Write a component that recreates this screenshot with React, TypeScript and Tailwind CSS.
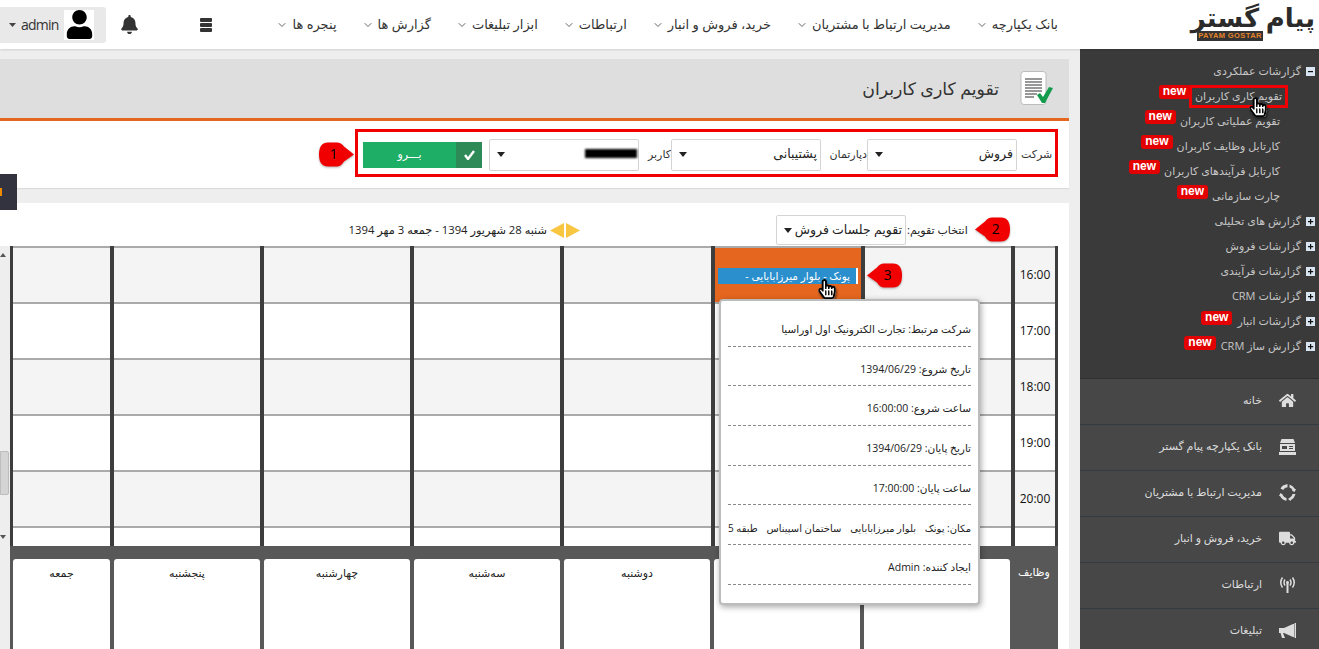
import { ChevronDown } from 'lucide-react';
import { FaBell, FaHandPointer, FaHome, FaRegHandPointer, FaTruck, FaUser } from 'react-icons/fa';

const NAV = ['بانک یکپارچه', 'مدیریت ارتباط با مشتریان', 'خرید، فروش و انبار', 'ارتباطات', 'ابزار تبلیغات', 'گزارش ها', 'پنجره ها'];

const TREE_TOP = ['گزارش های تحلیلی', 'گزارشات فروش', 'گزارشات فرآیندی', 'گزارشات CRM'];

const SUB_ITEMS = ['تقویم عملیاتی کاربران', 'کارتابل وظایف کاربران', 'کارتابل فرآیندهای کاربران', 'چارت سازمانی'];

const COLUMNS = [
  { width: 'w-[100px]', border: 'border-l-[3px]' },
  { width: 'w-[150px]', border: 'border-l-4' },
  { width: 'w-[150px]', border: 'border-l-4' },
  { width: 'w-[150px]', border: 'border-l-4' },
  { width: 'w-[151px]', border: 'border-l-4' },
  { width: 'w-[150px]', border: 'border-l-4' },
  { width: 'w-[150px]', border: 'border-l-4' },
];

const ROWS = [
  { h: 'h-[56px]', bg: 'bg-[#f4f4f4]', time: '16:00' },
  { h: 'h-[56px]', bg: 'bg-white', time: '17:00' },
  { h: 'h-[56px]', bg: 'bg-[#f4f4f4]', time: '18:00' },
  { h: 'h-[56px]', bg: 'bg-white', time: '19:00' },
  { h: 'h-[56px]', bg: 'bg-[#f4f4f4]', time: '20:00' },
  { h: 'h-[20px]', bg: 'bg-white', time: '' },
];

const TASKS = [
  { width: 'w-[97px]', label: 'جمعه' },
  { width: 'w-[146px]', label: 'پنجشنبه' },
  { width: 'w-[146px]', label: 'چهارشنبه' },
  { width: 'w-[146px]', label: 'سه‌شنبه' },
  { width: 'w-[146px]', label: 'دوشنبه' },
  { width: 'w-[146px]', label: '' },
  { width: 'w-[146px]', label: '' },
];

const POPUP_ROWS = [
  { text: 'شرکت مرتبط: تجارت الکترونیک اول اوراسیا', cls: 'tracking-[-0.4px]' },
  { text: 'تاریخ شروع: 1394/06/29', cls: '' },
  { text: 'ساعت شروع: 16:00:00', cls: '' },
  { text: 'تاریخ پایان: 1394/06/29', cls: '' },
  { text: 'ساعت پایان: 17:00:00', cls: '' },
];

const PLACE_PARTS = ['مکان: پونک', 'بلوار میرزابابایی', 'ساختمان اسپیناس', 'طبقه 5'];

function Caret() {
  return (
    <svg width="8" height="5" viewBox="0 0 8 5" className="shrink-0">
      <path d="M0 0h8L4 5z" fill="#222" />
    </svg>
  );
}

function Select({ width, height, label }: { width: string; height: string; label?: string }) {
  return (
    <div className={`${width} ${height} relative flex items-center justify-between pl-[7px] pr-[3px] bg-white border border-[#d4d4d4] rounded-[2px]`}>
      <Caret />
      {label && <span dir="rtl" className="text-[12.500px] text-[#222]">{label}</span>}
    </div>
  );
}

function Callout({ n, side, className }: { n: number; side: 'left' | 'right'; className: string }) {
  return (
    <div className={`absolute w-[37px] h-[25px] drop-shadow-[0_1px_1px_rgba(0,0,0,0.3)] ${className}`}>
      <svg width="37" height="25" viewBox="0 0 37 25" className="absolute inset-0">
        {side === 'right' ? (
          <path d="M10 0.500h9q4 0 7 4l10 8-10 7q-3 5-7 5h-9Q1 24.500 1 12.500T10 .500z" fill="#f00000" />
        ) : (
          <path d="M27 0.500h-9q-4 0-7 4l-10 8 10 7q3 5 7 5h9q9 0 9-12T27 .500z" fill="#f00000" />
        )}
      </svg>
      <span className={`absolute top-[3px] text-[14px] leading-[18px] text-black ${side === 'right' ? 'left-[12px]' : 'left-[18px]'}`}>{n}</span>
    </div>
  );
}

function Hand({ className }: { className: string }) {
  return (
    <div className={`absolute w-[16px] h-[21px] drop-shadow-[1px_2px_1px_rgba(0,0,0,0.5)] ${className}`}>
      <FaHandPointer className="absolute inset-0 text-white" size={20} />
      <FaRegHandPointer className="absolute inset-0 text-black" size={20} />
    </div>
  );
}

function TreeBox({ open }: { open?: boolean }) {
  return (
    <svg width="9" height="9" viewBox="0 0 9 9" className="shrink-0">
      <rect width="9" height="9" fill="#d8e4f0" />
      <path d={open ? 'M2 4h5v1.200H2z' : 'M2 4h2V2h1.200v2h2v1.200h-2v2H4v-2H2z'} fill="#111" />
    </svg>
  );
}

function NewBadge({ className = '' }: { className?: string }) {
  return (
    <span className={`inline-block h-[14px] px-[4px] rounded-[3px] bg-[#e30000] text-white text-[12px] leading-[12px] font-bold font-['Liberation_Sans',sans-serif] ${className}`}>
      new
    </span>
  );
}

function BankIcon() {
  return (
    <svg width="17" height="16" viewBox="0 0 17 16" fill="#ddd">
      <path d="M2.500 0h12l1.500 4H1z" />
      <path d="M1 5h15v7H1zM3 7v3h5V7zm7 0v1h4V7zm0 2v1h4V9z" fillRule="evenodd" />
      <path d="M0 13h17v3H0z" />
    </svg>
  );
}

function RingIcon() {
  return (
    <svg width="17" height="17" viewBox="0 0 17 17" fill="#ddd">
      <path d="M4 1.500 8.500 0v3.200Q5.500 3.500 4.200 6L1.500 4.500Q2.500 2.500 4 1.500z" />
      <path d="M10.500.500q3.500 1 5.500 4.500l1 0-1.500 3-3-1.500h1.200Q12.700 4 10.500 3.400z" />
      <path d="M16.500 10q-1 4-4.500 6l-.5 1-2.500-2 2-1.500q2-1.200 2.500-3.500z" />
      <path d="M7.500 16.800Q3 16 1 12L0 12l1.500-3 2.800 2H3.600Q5 13.500 7.500 14z" />
    </svg>
  );
}

function AntennaIcon() {
  return (
    <svg width="17" height="17" viewBox="0 0 17 17" fill="none" stroke="#ddd" strokeWidth="1.500">
      <path d="M3.500 1.500q-3.500 5 0 10M13.500 1.500q3.500 5 0 10M6 3.500q-2 3 0 6M11 3.500q2 3 0 6" />
      <circle cx="8.500" cy="6.500" r="1.400" fill="#ddd" stroke="none" />
      <path d="M8.500 7v10" strokeWidth="2" />
    </svg>
  );
}

function HornIcon() {
  return (
    <svg width="17" height="16" viewBox="0 0 17 16" fill="#ddd">
      <path d="M0 5h5L14 1h1v13h-1L5 10H4l2 5H3L1.500 10H0z" />
      <path d="M15.500 0H17v15h-1.500z" />
    </svg>
  );
}

function DocIcon() {
  return (
    <svg width="34" height="36" viewBox="0 0 34 36">
      <rect x="1" y="0.500" width="25" height="33" rx="3" fill="#fff" stroke="#bdbdbd" />
      <path d="M5 8h17M5 11h17M5 14h17M5 17h17M5 20h17M5 23h12M5 26h9" stroke="#777" strokeWidth="1.500" />
      <path d="M17 24l3-2 3 4 6-10 4 1-8 15h-3z" fill="#149a4c" />
    </svg>
  );
}

function Logo() {
  return (
    <div className="relative w-[124px] h-[30px]">
      <span dir="rtl" className="absolute right-[4px] top-[-11px] whitespace-nowrap text-[26px] leading-[36px] font-bold text-[#2b2b2b] tracking-[-1px]">
        پیام گستر
      </span>
      <span className="absolute left-[2px] bottom-[-1px] w-[66px] h-[10px] bg-[#333] text-[#e5832a] text-[7.500px] leading-[10px] tracking-[0.4px] text-center font-['Liberation_Sans',sans-serif] font-bold">
        PAYAM GOSTAR
      </span>
    </div>
  );
}

function Header() {
  return (
    <header className="h-[49px] bg-white flex items-center shrink-0 relative z-10 shadow-[0_1px_2px_rgba(0,0,0,0.12)]">
      <div className="w-[106px] h-[36px] bg-[#e9e9e9] rounded-r-[3px] flex items-center pl-[9px] shrink-0">
        <svg width="7" height="4" viewBox="0 0 7 4" className="mr-[5px]"><path d="M0 0h7L3.500 4z" fill="#444" /></svg>
        <span className="text-[14px] text-[#333] font-['Open_Sans',sans-serif] tracking-[-0.8px] leading-none">admin</span>
        <div className="ml-[6px] w-[30px] h-[30px] bg-white flex items-center justify-center overflow-hidden">
          <FaUser size={29} className="text-black" />
        </div>
      </div>
      <FaBell size={19} className="ml-[14px] text-[#333] shrink-0" />
      <div className="ml-[61px] flex flex-col gap-[1px] shrink-0">
        <div className="w-[12px] h-[4px] rounded-[1px] bg-[#333]" />
        <div className="w-[12px] h-[4px] rounded-[1px] bg-[#333]" />
        <div className="w-[12px] h-[4px] rounded-[1px] bg-[#333]" />
      </div>
      <nav className="ml-auto flex flex-row-reverse items-center gap-[25px] text-[13px] text-[#333]">
        {NAV.map((item) => (
          <div key={item} className="flex flex-row-reverse items-center gap-[4px]">
            <span dir="rtl" className="whitespace-nowrap">{item}</span>
            <ChevronDown size={12} strokeWidth={1.500} className="text-[#333]" />
          </div>
        ))}
      </nav>
      <div className="ml-[137px] shrink-0">
        <Logo />
      </div>
    </header>
  );
}

function Calendar() {
  return (
    <div className="relative h-[403px]">
      <div className="flex h-[300px] overflow-hidden">
        <div className="w-[10px] bg-[#eeeeee] relative shrink-0">
          <svg width="6" height="4" viewBox="0 0 6 4" className="absolute left-[0px] top-[7px]"><path d="M0 4h6L3 0z" fill="#555" /></svg>
          <div className="absolute left-[0px] top-[205px] w-[9px] h-[44px] bg-[#d4d4d4] border border-[#bdbdbd] rounded-r-[2px]" />
          <svg width="6" height="4" viewBox="0 0 6 4" className="absolute left-[0px] top-[289px]"><path d="M0 0h6L3 4z" fill="#555" /></svg>
        </div>
        {COLUMNS.map((col, c) => (
          <div key={c} className={`${col.width} ${col.border} border-[#3d3d3d] shrink-0 flex flex-col`}>
            {ROWS.map((row, r) =>
              c === 5 && r === 0 ? (
                <div key={r} className="h-[56px] bg-[#e5671f] border-t-2 border-[#aaaaaa] flex items-center justify-center pt-[2px]">
                  <div className="w-[140px] h-[16px] bg-[#2b8fcd] border-r-2 border-white overflow-hidden pr-[6px] flex items-center">
                    <span dir="rtl" className="block w-full text-[10.500px] leading-[16px] text-white whitespace-nowrap">پونک - بلوار میرزابابایی -</span>
                  </div>
                </div>
              ) : (
                <div key={r} className={`${row.h} ${row.bg} border-t-2 border-[#aaaaaa] shrink-0`} />
              ),
            )}
          </div>
        ))}
        <div className="w-[47px] border-x-[3px] border-l-4 border-[#3d3d3d] shrink-0 flex flex-col">
          {ROWS.map((row, r) => (
            <div key={r} className={`${row.h} ${row.bg} border-t-2 border-[#aaaaaa] shrink-0 flex items-center justify-center text-[12px] text-[#111] font-['Open_Sans',sans-serif]`}>
              {row.time}
            </div>
          ))}
        </div>
      </div>

      <div className="flex">
        <div className="w-[10px] bg-[#eeeeee] shrink-0" />
        <div className="w-[1048px] bg-[#585858] pt-[13px] pl-[3px] flex h-[103px]">
          {TASKS.map((t, i) => (
            <div key={i} className={`${t.width} mr-[4px] bg-white rounded-t-[3px] shrink-0 pt-[5px] text-center leading-[14px]`}>
              <span dir="rtl" className="text-[11px] text-[#222]">{t.label}</span>
            </div>
          ))}
          <div dir="rtl" className="flex-1 text-center text-[11px] leading-[14px] text-white pt-[6px] -ml-[4px]">وظایف</div>
        </div>
      </div>

      <Callout n={3} side="left" className="left-[866px] top-[17px]" />
      <Hand className="left-[817px] top-[33px]" />

      <div className="absolute left-[719px] top-[53px] w-[261px] h-[306px] bg-white rounded-[4px] border-2 border-[#bcbcbc] shadow-[1px_2px_6px_rgba(0,0,0,0.35)] px-[7px] pt-[6px]">
        {POPUP_ROWS.map((row) => (
          <div key={row.text} dir="rtl" className={`h-[39.700px] flex items-end pb-[8px] border-b border-dashed border-[#888888] text-[10.500px] text-[#222] whitespace-pre ${row.cls}`}>
            {row.text}
          </div>
        ))}
        <div dir="rtl" className="h-[39.700px] flex items-end justify-between pb-[8px] border-b border-dashed border-[#888888] text-[10px] tracking-[-0.3px] text-[#222] whitespace-nowrap">
          {PLACE_PARTS.map((part) => (
            <span key={part}>{part}</span>
          ))}
        </div>
        <div dir="rtl" className="h-[39.700px] flex items-end pb-[8px] border-b border-dashed border-[#888888] text-[10.500px] text-[#222]">
          ایجاد کننده: Admin
        </div>
      </div>
    </div>
  );
}

function Main() {
  return (
    <main className="w-[1080px] shrink-0 bg-[#eeeeee] pt-[10px] relative">
      <div className="w-[1069px]">
        <div className="h-[59px] bg-[#dedede] flex items-center justify-end">
          <h1 dir="rtl" className="text-[17.300px] text-[#333] font-normal mr-[21px]">تقویم کاری کاربران</h1>
          <div className="mr-[15px]"><DocIcon /></div>
        </div>
        <div className="h-[3px] bg-[#e5671f]" />
        <div className="relative h-[67px] bg-white shadow-[0_1px_1px_rgba(0,0,0,0.08)] flex justify-end pt-[8px] pr-[11px]">
          <div className="w-[703px] h-[48px] border-[3px] border-[#f00000] flex items-center pl-[5px] pt-[3px]">
            <div className="w-[119px] h-[26px] flex shrink-0">
              <div className="w-[93px] bg-[#1fae66] flex items-center justify-center text-white text-[11px]">
                <span dir="rtl">بـــرو</span>
              </div>
              <div className="w-[26px] bg-[#2e8b57] flex items-center justify-center">
                <svg width="11" height="10" viewBox="0 0 11 10"><path d="M1 5l3 4 6-8" fill="none" stroke="#fff" strokeWidth="2.400" /></svg>
              </div>
            </div>
            <div className="ml-[7px] relative">
              <Select width="w-[150px]" height="h-[32px]" />
              <div className="absolute left-[96px] top-[10px] w-[52px] h-[9px] bg-black blur-[1px]" />
            </div>
            <span dir="rtl" className="ml-[6px] w-[26px] text-[11px] text-[#333] whitespace-nowrap">کاربر</span>
            <Select width="w-[150px]" height="h-[32px]" label="پشتیبانی" />
            <span dir="rtl" className="ml-[5px] w-[41px] text-[11px] text-[#333] whitespace-nowrap">دپارتمان</span>
            <Select width="w-[150px]" height="h-[32px]" label="فروش" />
            <span dir="rtl" className="ml-[4px] text-[11px] text-[#333] whitespace-nowrap">شرکت</span>
          </div>
          <Callout n={1} side="right" className="left-[318px] top-[21px]" />
        </div>

        <div className="mt-[15px] bg-white h-[446px]">
          <div className="relative h-[43px] flex pt-[12px]">
            <span dir="rtl" className="ml-[347px] w-[200px] h-[30px] leading-[30px] text-[11.300px] text-[#222] whitespace-nowrap">
              شنبه 28 شهریور 1394 - جمعه 3 مهر 1394
            </span>
            <div className="ml-[3px] h-[30px] flex items-center gap-[2px]">
              <svg width="14" height="15" viewBox="0 0 14 15"><path d="M14 0v15L0 7.500z" fill="#f9c642" /></svg>
              <svg width="14" height="15" viewBox="0 0 14 15"><path d="M0 0v15l14-7.500z" fill="#f9c642" /></svg>
            </div>
            <div className="ml-[196px]">
              <Select width="w-[130px]" height="h-[30px]" label="تقویم جلسات فروش" />
            </div>
            <span dir="rtl" className="ml-[1px] h-[30px] leading-[30px] text-[11px] text-[#222] whitespace-nowrap">انتخاب تقویم:</span>
            <Callout n={2} side="left" className="left-[974px] top-[14px]" />
          </div>
          <Calendar />
        </div>
      </div>

      <div className="absolute left-0 top-[125px] w-[17px] h-[36px] bg-[#33333f] flex items-center">
        <div className="w-[2px] h-[8px] bg-[#f08a00]" />
      </div>
    </main>
  );
}

function Sidebar() {
  const menu = [
    { label: 'خانه', icon: <FaHome size={17} /> },
    { label: 'بانک یکپارچه پیام گستر', icon: <BankIcon /> },
    { label: 'مدیریت ارتباط با مشتریان', icon: <RingIcon /> },
    { label: 'خرید، فروش و انبار', icon: <FaTruck size={17} /> },
    { label: 'ارتباطات', icon: <AntennaIcon /> },
    { label: 'تبلیغات', icon: <HornIcon /> },
  ];

  return (
    <aside className="w-[239px] shrink-0 bg-[#3a3a3a] flex flex-col relative">
      <div className="h-[329px] pt-[10px] pr-[4px] text-[11px] text-[#c6c6c6] shrink-0">
        <div className="h-[25px] flex flex-row-reverse items-center gap-[5px]">
          <TreeBox open />
          <span dir="rtl">گزارشات عملکردی</span>
        </div>
        <div className="h-[25px] flex flex-row-reverse items-center pr-[27px]">
          <div className="w-[99px] h-[23px] border-[3px] border-[#f00000] flex items-center justify-center">
            <span dir="rtl" className="whitespace-nowrap">تقویم کاری کاربران</span>
          </div>
          <NewBadge className="-translate-y-[5px] -mr-[1px]" />
        </div>
        {SUB_ITEMS.map((item) => (
          <div key={item} className="h-[25px] flex flex-row-reverse items-center pr-[35px] gap-[4px]">
            <span dir="rtl" className="whitespace-nowrap">{item}</span>
            <NewBadge className="-translate-y-[5px]" />
          </div>
        ))}
        {TREE_TOP.map((item) => (
          <div key={item} className="h-[25px] flex flex-row-reverse items-center gap-[5px]">
            <TreeBox />
            <span dir="rtl" className="whitespace-nowrap">{item}</span>
          </div>
        ))}
        <div className="h-[25px] flex flex-row-reverse items-center gap-[5px]">
          <TreeBox />
          <span dir="rtl">گزارشات انبار</span>
          <NewBadge className="-translate-y-[4px]" />
        </div>
        <div className="h-[25px] flex flex-row-reverse items-center gap-[5px]">
          <TreeBox />
          <span dir="rtl">گزارش ساز CRM</span>
          <NewBadge className="-translate-y-[4px]" />
        </div>
      </div>
      <div className="flex-1 bg-[#474747] border-t border-[#2f2f2f]">
        {menu.map((m) => (
          <div key={m.label} className="h-[46px] flex flex-row-reverse items-center pb-[2px] border-b border-[#333a40] text-[#dddddd]">
            <div className="w-[32px] mr-[16px] flex justify-center shrink-0">{m.icon}</div>
            <span dir="rtl" className="mr-[9px] text-[11px] whitespace-nowrap">{m.label}</span>
          </div>
        ))}
      </div>
      <Hand className="left-[168px] top-[48px]" />
    </aside>
  );
}

export default function App() {
  return (
    <div className="w-[1319px] h-[649px] overflow-hidden flex flex-col bg-white font-['Open_Sans','DejaVu_Sans',sans-serif]">
      <Header />
      <div className="flex flex-1 min-h-0">
        <Main />
        <Sidebar />
      </div>
    </div>
  );
}
